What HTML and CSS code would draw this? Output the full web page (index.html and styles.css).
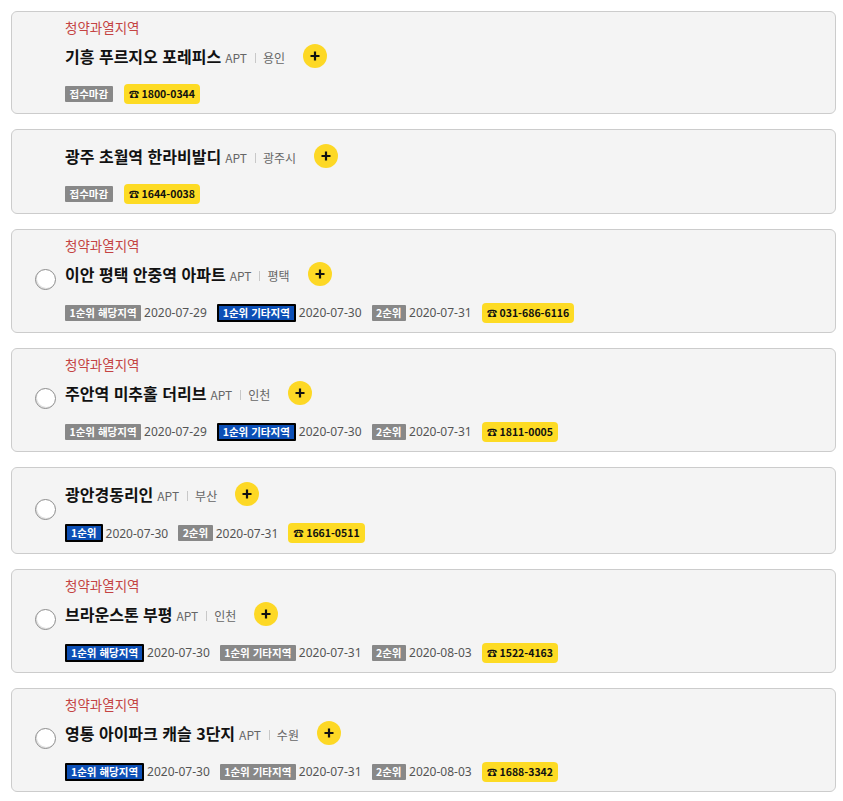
FILE: index.html
```html
<!DOCTYPE html>
<html lang="ko">
<head>
<meta charset="utf-8">
<title>청약 일정</title>
<link rel="stylesheet" href="styles.css">
</head>
<body>
<div class="list">

  <div class="card">
    <div class="check-col"></div>
    <div class="body">
      <div class="label">청약과열지역</div>
      <div class="title-row"><span class="title">기흥 푸르지오 포레피스</span><span class="type">APT</span><span class="sep"></span><span class="region">용인</span><span class="plus"><svg viewBox="0 0 12 12" width="12" height="12"><path d="M6 1.5v9M1.5 6h9" stroke="#111" stroke-width="2.2"/></svg></span></div>
      <div class="meta"><span class="badge gray">접수마감</span><span class="phone">☎ 1800-0344</span></div>
    </div>
  </div>

  <div class="card">
    <div class="check-col"></div>
    <div class="body">
      <div class="title-row"><span class="title">광주 초월역 한라비발디</span><span class="type">APT</span><span class="sep"></span><span class="region">광주시</span><span class="plus"><svg viewBox="0 0 12 12" width="12" height="12"><path d="M6 1.5v9M1.5 6h9" stroke="#111" stroke-width="2.2"/></svg></span></div>
      <div class="meta"><span class="badge gray">접수마감</span><span class="phone">☎ 1644-0038</span></div>
    </div>
  </div>

  <div class="card">
    <div class="check-col"><span class="check"></span></div>
    <div class="body">
      <div class="label">청약과열지역</div>
      <div class="title-row"><span class="title">이안 평택 안중역 아파트</span><span class="type">APT</span><span class="sep"></span><span class="region">평택</span><span class="plus"><svg viewBox="0 0 12 12" width="12" height="12"><path d="M6 1.5v9M1.5 6h9" stroke="#111" stroke-width="2.2"/></svg></span></div>
      <div class="meta dated"><span class="badge gray">1순위 해당지역</span><span class="date">2020-07-29</span><span class="badge blue">1순위 기타지역</span><span class="date">2020-07-30</span><span class="badge gray">2순위</span><span class="date">2020-07-31</span><span class="phone">☎ 031-686-6116</span></div>
    </div>
  </div>

  <div class="card">
    <div class="check-col"><span class="check"></span></div>
    <div class="body">
      <div class="label">청약과열지역</div>
      <div class="title-row"><span class="title">주안역 미추홀 더리브</span><span class="type">APT</span><span class="sep"></span><span class="region">인천</span><span class="plus"><svg viewBox="0 0 12 12" width="12" height="12"><path d="M6 1.5v9M1.5 6h9" stroke="#111" stroke-width="2.2"/></svg></span></div>
      <div class="meta dated"><span class="badge gray">1순위 해당지역</span><span class="date">2020-07-29</span><span class="badge blue">1순위 기타지역</span><span class="date">2020-07-30</span><span class="badge gray">2순위</span><span class="date">2020-07-31</span><span class="phone">☎ 1811-0005</span></div>
    </div>
  </div>

  <div class="card">
    <div class="check-col"><span class="check"></span></div>
    <div class="body">
      <div class="title-row"><span class="title">광안경동리인</span><span class="type">APT</span><span class="sep"></span><span class="region">부산</span><span class="plus"><svg viewBox="0 0 12 12" width="12" height="12"><path d="M6 1.5v9M1.5 6h9" stroke="#111" stroke-width="2.2"/></svg></span></div>
      <div class="meta dated tall"><span class="badge blue">1순위</span><span class="date">2020-07-30</span><span class="badge gray">2순위</span><span class="date">2020-07-31</span><span class="phone">☎ 1661-0511</span></div>
    </div>
  </div>

  <div class="card">
    <div class="check-col"><span class="check"></span></div>
    <div class="body">
      <div class="label">청약과열지역</div>
      <div class="title-row"><span class="title">브라운스톤 부평</span><span class="type">APT</span><span class="sep"></span><span class="region">인천</span><span class="plus"><svg viewBox="0 0 12 12" width="12" height="12"><path d="M6 1.5v9M1.5 6h9" stroke="#111" stroke-width="2.2"/></svg></span></div>
      <div class="meta dated"><span class="badge blue">1순위 해당지역</span><span class="date">2020-07-30</span><span class="badge gray">1순위 기타지역</span><span class="date">2020-07-31</span><span class="badge gray">2순위</span><span class="date">2020-08-03</span><span class="phone">☎ 1522-4163</span></div>
    </div>
  </div>

  <div class="card">
    <div class="check-col"><span class="check"></span></div>
    <div class="body">
      <div class="label">청약과열지역</div>
      <div class="title-row"><span class="title">영통 아이파크 캐슬 3단지</span><span class="type">APT</span><span class="sep"></span><span class="region">수원</span><span class="plus"><svg viewBox="0 0 12 12" width="12" height="12"><path d="M6 1.5v9M1.5 6h9" stroke="#111" stroke-width="2.2"/></svg></span></div>
      <div class="meta dated"><span class="badge blue">1순위 해당지역</span><span class="date">2020-07-30</span><span class="badge gray">1순위 기타지역</span><span class="date">2020-07-31</span><span class="badge gray">2순위</span><span class="date">2020-08-03</span><span class="phone">☎ 1688-3342</span></div>
    </div>
  </div>

</div>
</body>
</html>
```

FILE: styles.css
```css
html, body {
  margin: 0;
  padding: 0;
  background: #fff;
}
body {
  font-family: "Noto Sans CJK KR", "Noto Sans", sans-serif;
  color: #111;
}
.list {
  display: flex;
  flex-direction: column;
  gap: 15px;
  padding: 11px 7px 0 11px;
}
.card {
  display: flex;
  align-items: center;
  background: #f4f4f4;
  border: 1px solid #cccccc;
  border-radius: 6px;
  padding: 6px 0 9px 0;
}
.check-col {
  width: 53px;
  flex: none;
  padding-left: 23px;
  box-sizing: border-box;
  display: flex;
  align-items: center;
}
.check {
  width: 19px;
  height: 19px;
  border-radius: 50%;
  border: 1px solid #8c8c8c;
  background: #fff;
  box-shadow: inset 1px -1px 0 #e0e0e0;
}
.body {
  flex: 1;
  display: flex;
  flex-direction: column;
}
.label {
  height: 18px;
  line-height: 18px;
  font-size: 13.5px;
  color: #c44342;
}
.title-row {
  height: 32px;
  margin-top: 4px;
  display: flex;
  align-items: center;
}
.title {
  font-size: 16px;
  font-weight: 700;
  color: #111;
}
.type {
  font-size: 12px;
  color: #666;
  margin-left: 4px;
  padding-top: 3px;
}
.sep {
  width: 1px;
  height: 10px;
  background: #c8c8c8;
  margin: 3px 7px 0 8px;
}
.region {
  font-size: 12px;
  color: #666;
  padding-top: 3px;
}
.plus {
  width: 24px;
  height: 24px;
  border-radius: 50%;
  background: #fdd825;
  margin-left: 18px;
  display: flex;
  align-items: center;
  justify-content: center;
}
.meta {
  margin-top: 12px;
  height: 20px;
  display: flex;
  align-items: center;
}
.meta.dated {
  height: 21px;
}
.meta.dated.tall {
  height: 22px;
}
.badge {
  height: 16px;
  line-height: 16px;
  padding: 0 4.5px;
  font-size: 10.5px;
  font-weight: 700;
  color: #fff;
  border-radius: 1px;
  box-sizing: border-box;
}
.badge.gray {
  background: #888888;
}
.badge.blue {
  background: #0c4fb6;
  border: 2px solid #000;
  height: 18px;
  line-height: 14px;
  padding: 0 4px;
}
.date {
  font-family: "Noto Sans", sans-serif;
  font-size: 12px;
  color: #555;
  margin: 0 10px 0 3px;
}
.badge + .phone {
  margin-left: 11px;
}
.phone {
  height: 20px;
  line-height: 20px;
  padding: 0 5px;
  background: #fddb24;
  border-radius: 4px;
  font-size: 10.5px;
  font-weight: 700;
  color: #111;
}
```
